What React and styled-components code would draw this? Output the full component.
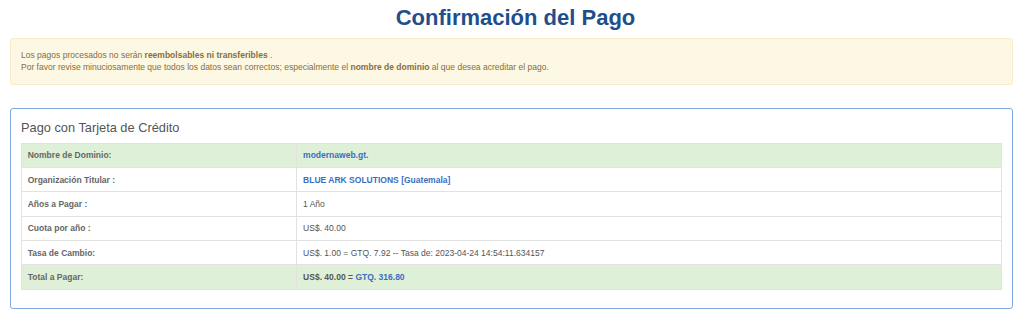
import React from "react";
import styled, { createGlobalStyle } from "styled-components";

const GlobalStyle = createGlobalStyle`
  html, body { margin: 0; padding: 0; background: #ffffff; }
  body {
    font-family: "Liberation Sans", Arial, Helvetica, sans-serif;
    font-size: 8.53px;
    line-height: 1.42857;
    color: #555555;
  }
  * { box-sizing: border-box; }
`;

const Page = styled.div`
  padding: 6px 11px 10px 10px;
`;

const Title = styled.h1`
  margin: 0 0 8px;
  padding-left: 8px;
  text-align: center;
  font-size: 22px;
  line-height: 1.1;
  font-weight: 700;
  color: #1f4f8b;
`;

const Alert = styled.div`
  background: #fcf8e3;
  border: 1px solid #faebcc;
  border-radius: 3px;
  color: #8a6d3b;
  padding: 10px 10px;
  margin-bottom: 23px;
  line-height: 12.2px;
`;

const Line = styled.div``;

const Panel = styled.section`
  border: 1px solid #7ca8dc;
  border-radius: 3px;
  padding: 12px 10px 18px;
`;

const PanelTitle = styled.h3`
  margin: 0 0 8px;
  font-size: 12.8px;
  font-weight: 400;
  line-height: 1.1;
  color: #555555;
`;

const Table = styled.table`
  width: 100%;
  border-collapse: collapse;
  border-spacing: 0;
`;

const Row = styled.tr`
  background: ${(p) => (p.$success ? "#dff0d8" : "#ffffff")};
`;

const Label = styled.td`
  width: 28.1%;
  border: 1px solid #e2e2e2;
  padding: 5.6px 5.7px;
  height: 24.2px;
  font-weight: 700;
  color: #666666;
  vertical-align: middle;
`;

const Value = styled.td`
  border: 1px solid #e2e2e2;
  padding: 5.6px 5.7px;
  height: 24.2px;
  color: ${(p) => (p.$link ? "#3b6ec3" : "#555555")};
  font-weight: ${(p) => (p.$bold || p.$link ? 700 : 400)};
  vertical-align: middle;
`;

const Accent = styled.span`
  color: #3b6ec3;
`;

const rows = [
  { label: "Nombre de Dominio:", value: "modernaweb.gt.", link: true, success: true },
  { label: "Organización Titular :", value: "BLUE ARK SOLUTIONS [Guatemala]", link: true },
  { label: "Años a Pagar :", value: "1 Año" },
  { label: "Cuota por año :", value: "US$. 40.00" },
  { label: "Tasa de Cambio:", value: "US$. 1.00 = GTQ. 7.92 -- Tasa de: 2023-04-24 14:54:11.634157" },
];

export default function App() {
  return (
    <>
      <GlobalStyle />
      <Page>
        <Title>Confirmación del Pago</Title>
        <Alert>
          <Line>
            Los pagos procesados no serán <b>reembolsables ni transferibles</b> .
          </Line>
          <Line>
            Por favor revise minuciosamente que todos los datos sean correctos; especialmente el{" "}
            <b>nombre de dominio</b> al que desea acreditar el pago.
          </Line>
        </Alert>
        <Panel>
          <PanelTitle>Pago con Tarjeta de Crédito</PanelTitle>
          <Table>
            <tbody>
              {rows.map((r) => (
                <Row key={r.label} $success={r.success}>
                  <Label>{r.label}</Label>
                  <Value $link={r.link}>{r.value}</Value>
                </Row>
              ))}
              <Row $success>
                <Label>Total a Pagar:</Label>
                <Value $bold>
                  US$. 40.00 = <Accent>GTQ. 316.80</Accent>
                </Value>
              </Row>
            </tbody>
          </Table>
        </Panel>
      </Page>
    </>
  );
}
